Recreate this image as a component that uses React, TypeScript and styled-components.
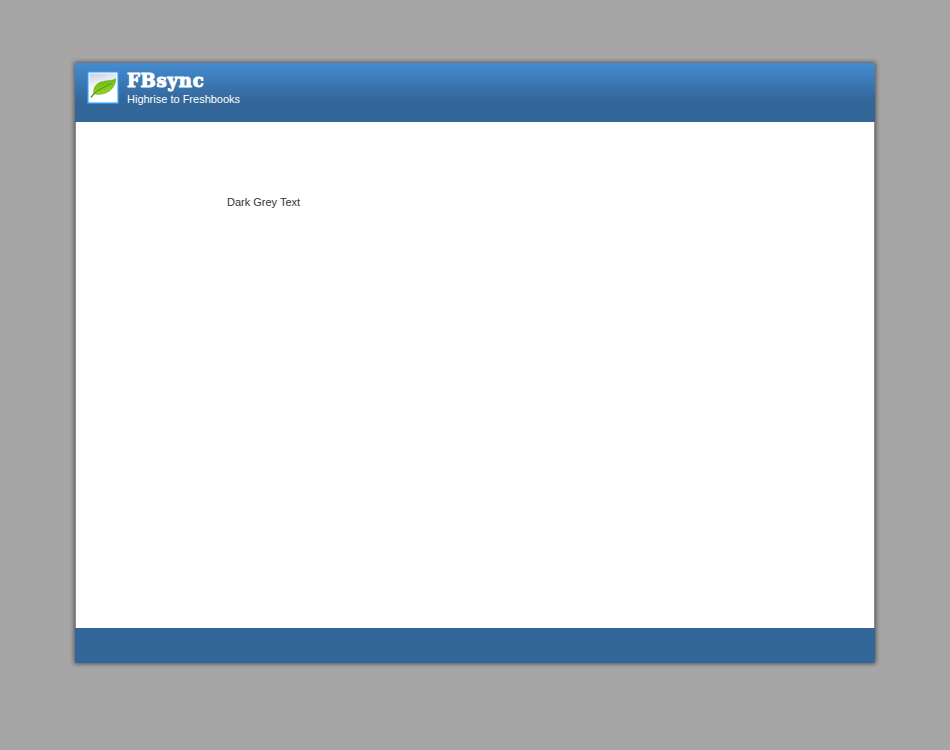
import React from 'react';
import styled, { createGlobalStyle } from 'styled-components';

const GlobalStyle = createGlobalStyle`
  body {
    margin: 0;
    background: #a6a6a6;
    font-family: "Liberation Sans", Arial, sans-serif;
    font-size: 11px;
  }
`;

const Page = styled.div`
  box-sizing: border-box;
  height: 750px;
  padding-top: 63px;
  overflow: hidden;
`;

const Window = styled.main`
  display: flex;
  flex-direction: column;
  width: 800px;
  height: 600px;
  margin: 0 auto;
  border-radius: 1px;
  overflow: hidden;
  box-shadow: 0 0 4px 1px rgba(0, 0, 0, 0.5);
`;

const Header = styled.header`
  box-sizing: border-box;
  display: flex;
  gap: 7px;
  flex: 0 0 59px;
  padding: 8px 0 0 12px;
  color: #fff;
  background: linear-gradient(#448cd0 0, #336699 38px);
`;

const Logo = styled.svg`
  display: block;
  width: 33px;
  height: 33px;
`;

const Brand = styled.div`
  display: flex;
  flex-direction: column;
`;

const Title = styled.h1`
  box-sizing: border-box;
  margin: 0;
  height: 22px;
  padding-top: 1px;
  font: 700 18px/18px "DejaVu Serif", serif;
  letter-spacing: 0.8px;
  -webkit-text-stroke: 1px #fff;
  white-space: nowrap;
`;

const Tagline = styled.span`
  line-height: 13px;
  white-space: nowrap;
`;

const Content = styled.section`
  flex: 1;
  padding: 74px 0 0 151px;
  border: solid #8d8d8d;
  border-width: 0 1px;
  background: #fff;
  color: #333;
  line-height: 13px;
`;

const Footer = styled.footer`
  flex: 0 0 35px;
  background: #336699;
`;

function LeafLogo() {
  return (
    <Logo viewBox="0 0 33 33" aria-hidden="true">
      <defs>
        <linearGradient id="tile" x1="0" y1="0" x2="0.25" y2="1">
          <stop offset="0" stopColor="#c5d0e4" />
          <stop offset="0.45" stopColor="#f1f4f9" />
          <stop offset="0.6" stopColor="#fff" />
        </linearGradient>
        <linearGradient id="leaf" x1="0" y1="0" x2="0.3" y2="1">
          <stop offset="0" stopColor="#5fae16" />
          <stop offset="0.5" stopColor="#7cc61d" />
          <stop offset="1" stopColor="#91d029" />
        </linearGradient>
      </defs>
      <rect width="32" height="33" fill="#2d94ed" />
      <rect x="1.5" y="1.5" width="29" height="30" fill="#fff" />
      <rect x="2.5" y="2.5" width="27" height="28" fill="url(#tile)" />
      <path d="M7 22.7C5.5 17.5 9 12.5 14.5 10.8C19.5 9.3 25 10 28.7 7.7C29 14 24.5 20 18 22.3C14 23.7 10 23.8 7 22.7Z" fill="url(#leaf)" stroke="#5ba516" strokeWidth="0.5" />
      <path d="M7 22.7C12 17.8 18 16.5 24.5 12.5" fill="none" stroke="#498f0d" strokeWidth="0.9" />
      <path d="M4.3 26L7.2 22.5" fill="none" stroke="#669329" strokeWidth="1.4" strokeLinecap="round" />
    </Logo>
  );
}

export default function App() {
  return (
    <>
      <GlobalStyle />
      <Page>
        <Window>
          <Header>
            <LeafLogo />
            <Brand>
              <Title>FBsync</Title>
              <Tagline>Highrise to Freshbooks</Tagline>
            </Brand>
          </Header>
          <Content>Dark Grey Text</Content>
          <Footer />
        </Window>
      </Page>
    </>
  );
}
